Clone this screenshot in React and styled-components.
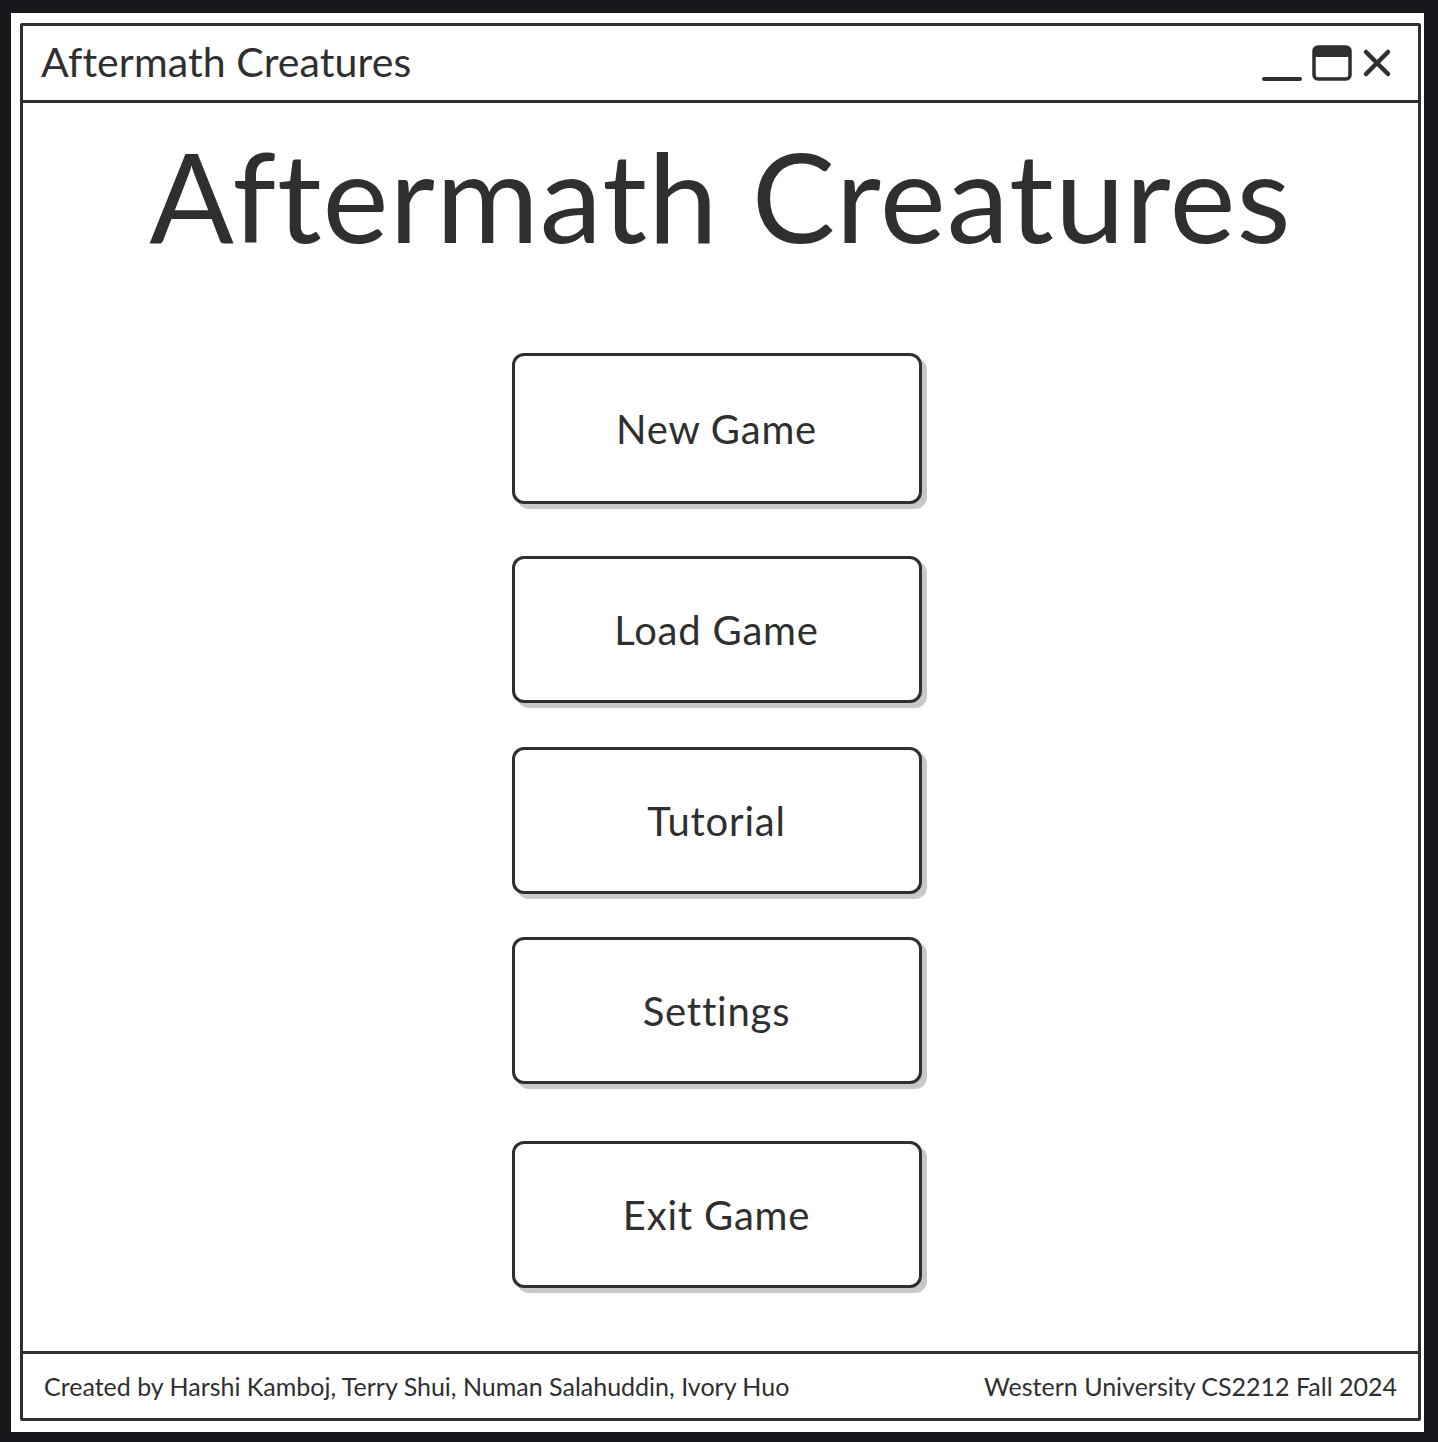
import styled, { createGlobalStyle } from 'styled-components';

const GlobalStyle = createGlobalStyle`
  html, body {
    margin: 0;
    padding: 0;
    background-color: #18181c;
  }
  body {
    font-family: 'Lato', 'Noto Sans', sans-serif;
    color: #2f2f2f;
  }
`;

const Sheet = styled.div`
  margin: 13px 0 0 11px;
  width: 1413px;
  height: 1419px;
  background-color: #ffffff;
  padding: 10px 3px 0 9px;
  box-sizing: border-box;
`;

const Window = styled.div`
  width: 1401px;
  height: 1398px;
  border: 3px solid #2f2f2f;
  border-radius: 2px;
  box-sizing: border-box;
  display: flex;
  flex-direction: column;
`;

const TitleBar = styled.header`
  height: 77px;
  border-bottom: 3px solid #2f2f2f;
  box-sizing: border-box;
  display: flex;
  align-items: center;
  justify-content: space-between;
  padding: 0 26px 4px 18px;
  font-size: 41px;
  letter-spacing: 0.1px;
`;

const Controls = styled.div`
  display: flex;
  align-items: center;
  gap: 10px;
  margin-top: 4px;
`;

const Content = styled.main`
  flex: 1;
  display: flex;
  flex-direction: column;
  align-items: center;
`;

const Heading = styled.h1`
  margin: 17px 0 0 0;
  font-size: 125px;
  font-weight: 400;
  line-height: 150px;
  letter-spacing: 1px;
`;

const Menu = styled.nav`
  display: flex;
  flex-direction: column;
  align-items: center;
  margin-top: 83px;
  padding-right: 8px;
`;

const MenuButton = styled.button`
  width: 410px;
  height: ${(p) => p.$height}px;
  margin-top: ${(p) => p.$space}px;
  background-color: #ffffff;
  border: 3px solid #2f2f2f;
  border-radius: 12px;
  box-shadow: 5px 5px 0 #c8c8c8;
  font-family: inherit;
  font-size: 40px;
  letter-spacing: 0.8px;
  color: #2f2f2f;
  cursor: pointer;
  box-sizing: border-box;
`;

const Footer = styled.footer`
  height: 67px;
  border-top: 3px solid #2f2f2f;
  box-sizing: border-box;
  display: flex;
  align-items: center;
  justify-content: space-between;
  padding: 0 21px 0 21px;
  font-size: 25px;
`;

const buttons = [
  { label: 'New Game', height: 151, space: 0 },
  { label: 'Load Game', height: 147, space: 52 },
  { label: 'Tutorial', height: 147, space: 44 },
  { label: 'Settings', height: 147, space: 43 },
  { label: 'Exit Game', height: 147, space: 57 },
];

function WindowIcons() {
  return (
    <Controls>
      <svg width="40" height="40" viewBox="0 0 40 40">
        <line x1="2" y1="36" x2="38" y2="36" stroke="#2f2f2f" strokeWidth="4" strokeLinecap="round" />
      </svg>
      <svg width="40" height="36" viewBox="0 0 40 36">
        <rect x="2" y="2" width="36" height="32" rx="4" fill="none" stroke="#2f2f2f" strokeWidth="3.5" />
        <rect x="2" y="2" width="36" height="10" rx="3" fill="#2f2f2f" />
      </svg>
      <svg width="30" height="30" viewBox="0 0 30 30">
        <path d="M4 4 L26 26 M26 4 L4 26" stroke="#2f2f2f" strokeWidth="4.5" strokeLinecap="round" />
      </svg>
    </Controls>
  );
}

export default function App() {
  return (
    <>
      <GlobalStyle />
      <Sheet>
        <Window>
          <TitleBar>
            <span>Aftermath Creatures</span>
            <WindowIcons />
          </TitleBar>
          <Content>
            <Heading>Aftermath Creatures</Heading>
            <Menu>
              {buttons.map((b) => (
                <MenuButton key={b.label} $height={b.height} $space={b.space}>
                  {b.label}
                </MenuButton>
              ))}
            </Menu>
          </Content>
          <Footer>
            <span>Created by Harshi Kamboj, Terry Shui, Numan Salahuddin, Ivory Huo</span>
            <span>Western University CS2212 Fall 2024</span>
          </Footer>
        </Window>
      </Sheet>
    </>
  );
}
